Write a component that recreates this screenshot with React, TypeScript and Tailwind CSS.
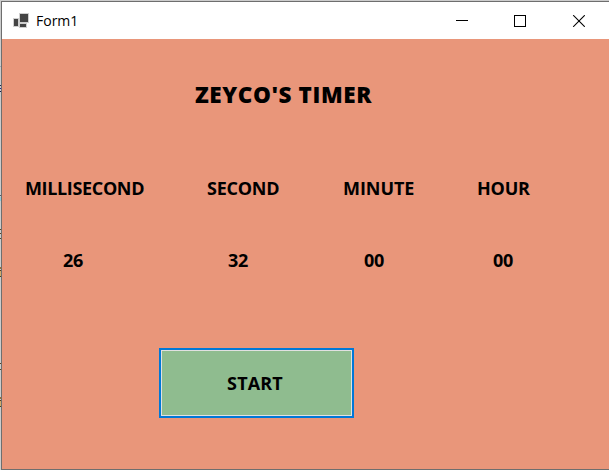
const font = "font-['Open_Sans','Noto_Sans',sans-serif]";

const units = [
  { label: 'MILLISECOND', value: '26', column: 'w-[182px]', indent: 'pl-[38px]', tracking: 'tracking-[-0.35px]' },
  { label: 'SECOND', value: '32', column: 'w-[136px]', indent: 'pl-[21px]', tracking: 'tracking-[-0.25px]' },
  { label: 'MINUTE', value: '00', column: 'w-[134px]', indent: 'pl-[21px]', tracking: 'tracking-[-0.05px]' },
  { label: 'HOUR', value: '00', column: 'w-[100px]', indent: 'pl-[16px]', tracking: 'tracking-[-0.2px]' },
];

const specks = [
  [66, '#a5a5b2', 1],
  [85, '#25254d', 1],
  [88, '#25258a', 1],
  [91, '#17174c', 1],
  [195, '#565666', 1],
  [197, '#91cbd9', 4],
  [229, '#5c4322', 1],
  [233, '#5c4322', 1],
  [238, '#5c4322', 1],
  [267, '#94703a', 2],
  [270, '#523d20', 1],
  [271, '#d2ac68', 5],
  [276, '#523d20', 1],
  [363, '#5c4322', 1],
  [369, '#5c4322', 1],
  [397, '#94703a', 2],
  [400, '#523d20', 1],
  [401, '#d2ac68', 5],
  [406, '#523d20', 1],
] as const;

function TitleBar() {
  return (
    <header className="flex h-[37px] shrink-0 items-center bg-white pl-[11px]">
      <svg width="17" height="16" viewBox="0 0 17 16" shapeRendering="crispEdges" className="shrink-0">
        <path d="M6 0h10v10h-2v5H6v-1H0V5h6z" fill="#cfcfcf" />
        <path d="M7 1h8v8H7zM1 6h4v7H1zM7 11h6v3H7z" fill="#444" />
      </svg>
      <span className="ml-[6px] text-[14px] leading-[18px] text-black">Form1</span>
      <div className="ml-auto flex items-center gap-[46px] pr-[24px]">
        <svg width="12" height="12" viewBox="0 0 12 12" shapeRendering="crispEdges">
          <path d="M0 5.5h12" stroke="#000" />
        </svg>
        <svg width="12" height="12" viewBox="0 0 12 12" shapeRendering="crispEdges">
          <path d="M.5.5h11v11H.5z" fill="none" stroke="#000" />
        </svg>
        <svg width="13" height="12" viewBox="0 0 13 12">
          <path d="M1.2.2l11.6 11.6M12.8.2L1.2 11.8" stroke="#000" strokeWidth="1.1" />
        </svg>
      </div>
    </header>
  );
}

export default function App() {
  return (
    <div className={`relative flex h-[470px] w-[609px] overflow-hidden bg-[#cccccc] pl-px pt-px ${font}`}>
      <svg width="1" height="470" shapeRendering="crispEdges" className="absolute left-0 top-0">
        {specks.map(([y, fill, height]) => (
          <rect key={y} x="0" y={y} width="1" height={height} fill={fill} />
        ))}
      </svg>
      <div className="flex flex-1 flex-col border-b border-l border-t border-[#6e6e6e]">
        <TitleBar />
        <main className="flex flex-1 flex-col bg-[#e9967a] text-[18px] font-bold leading-[24px] text-black">
          <h1 className="ml-[193px] mt-[40px] whitespace-nowrap text-[22.5px] font-extrabold leading-[32px] tracking-[0.58px]">
            ZEYCO'S TIMER
          </h1>
          <section className="mt-[65px] flex pl-[23px]">
            {units.map((unit) => (
              <div key={unit.label} className={`flex shrink-0 flex-col gap-[48px] ${unit.column}`}>
                <span className={unit.tracking}>{unit.label}</span>
                <span className={`tracking-[-0.2px] ${unit.indent}`}>{unit.value}</span>
              </div>
            ))}
          </section>
          <button className="ml-[157px] mt-[76px] flex h-[70px] w-[195px] items-center justify-center border-2 border-[#0078d7] bg-[#8fbc8f] pr-[3px] tracking-[0.15px] shadow-[inset_0_0_0_1px_#e1e1e1]">
            START
          </button>
        </main>
      </div>
    </div>
  );
}
